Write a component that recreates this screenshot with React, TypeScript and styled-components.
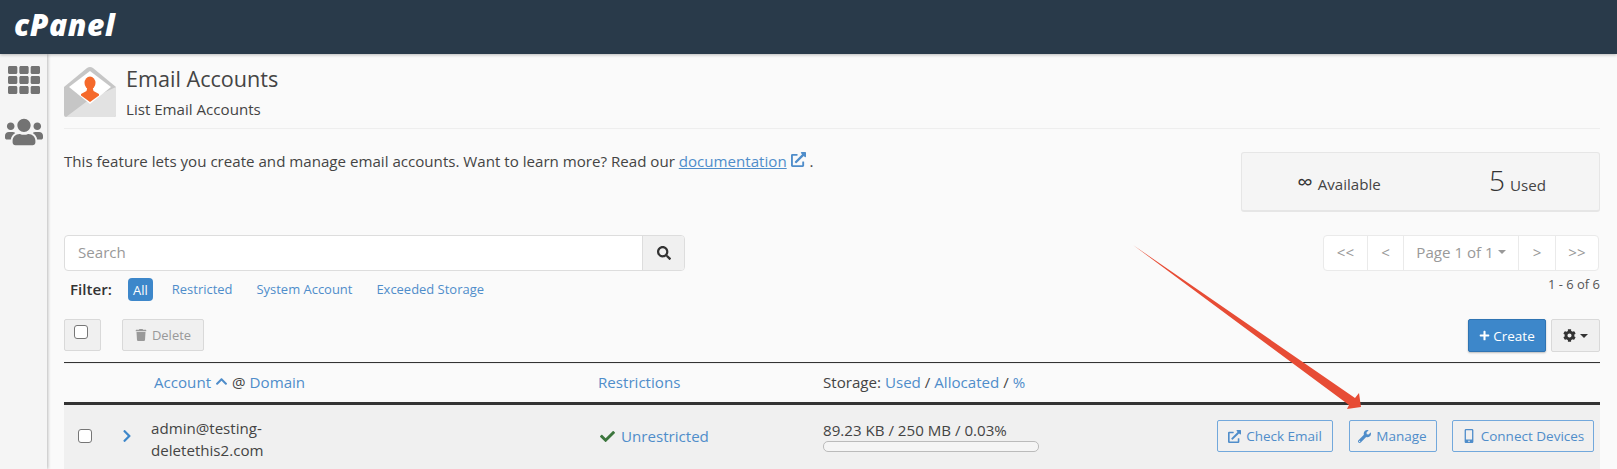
import React from "react";
import styled, { createGlobalStyle } from "styled-components";
import { FaTh, FaUsers, FaSearch, FaTrash, FaChevronUp, FaChevronRight, FaCheck, FaPlus, FaCog, FaExternalLinkAlt, FaWrench, FaMobileAlt } from "react-icons/fa";

const Global = createGlobalStyle`
  html, body { margin: 0; padding: 0; width: 1617px; height: 469px; overflow: hidden; background: #fafafa; }
  body { font-family: "Open Sans", "Liberation Sans", sans-serif; color: #444; font-size: 15.12px; }
  * { box-sizing: border-box; }
`;

const Page = styled.div`position: relative; width: 1617px; height: 469px; overflow: hidden;`;
const TopBar = styled.header`
  height: 54px; background: #293a4a; display: flex; align-items: center; padding-left: 14px;
  box-shadow: 0 1px 3px rgba(0,0,0,.25); position: relative; z-index: 2;
`;
const Logo = styled.span`
  font-family: "Open Sans", sans-serif; font-weight: 800; font-style: italic; font-size: 30px; line-height: 1;
  color: #fff; letter-spacing: 0.6px; position: relative; top: -2px;
`;
const Body = styled.div`display: flex; height: 415px;`;
const Side = styled.nav`
  width: 47px; background: #f5f5f5; box-shadow: 1px 0 3px rgba(0,0,0,.25); display: flex; flex-direction: column;
  align-items: center; padding-top: 10px; gap: 17px; color: #737373; flex: none; z-index: 1;
`;
const Main = styled.main`flex: none; width: 1536px; margin-left: 17px; padding-top: 12px;`;
const Heading = styled.div`display: flex; gap: 10px; height: 63px; border-bottom: 1px solid #eee;`;
const Titles = styled.div`display: flex; flex-direction: column;`;
const Title = styled.h1`margin: -1px 0 0; font-size: 21.6px; font-weight: 400; line-height: 27px; color: #444;`;
const Sub = styled.div`font-size: 15.12px; line-height: 20px; margin-top: 7px; color: #444;`;
const Intro = styled.div`display: flex; justify-content: space-between; height: 106px; padding-top: 22px;`;
const Desc = styled.p`margin: 0; font-size: 15.12px; line-height: 20px; display: flex; align-items: center; height: 20px;`;
const Link = styled.a`color: #4f8dca; text-decoration: ${p => p.$u ? "underline" : "none"};`;
const Stats = styled.div`
  width: 359px; height: 60px; background: #f5f5f5; border: 1px solid #e6e6e6; border-bottom-width: 2px; border-radius: 3px;
  display: grid; grid-template-columns: 194px 1fr; align-items: center; margin-top: 1px; font-size: 15.12px; color: #444; padding-bottom: 2px;
`;
const Stat = styled.div`display: flex; justify-content: center; align-items: baseline; gap: 5px; margin-bottom: ${p => p.$lift ?? 0}px;`;
const Big = styled.span`font-size: ${p => p.$s}px; font-weight: ${p => p.$w}; line-height: 32px; color: #333; position: relative; top: ${p => p.$t}px;`;
const Controls = styled.div`display: flex; justify-content: space-between; height: 84px;`;
const Left = styled.div`display: flex; flex-direction: column;`;
const SearchBox = styled.div`width: 621px; height: 36px; display: flex; border: 1px solid #ddd; border-radius: 4px; background: #fff; overflow: hidden;`;
const SearchInput = styled.div`flex: 1; padding-left: 13px; line-height: 33px; font-size: 15.12px; color: #999;`;
const SearchBtn = styled.div`width: 42px; background: #f0f0f0; border-left: 1px solid #ddd; display: flex; align-items: center; justify-content: center; color: #333;`;
const Filters = styled.div`display: flex; align-items: center; margin-top: 7px; padding-left: 6px; font-size: 12.96px; height: 23px;`;
const FilterLabel = styled.strong`font-size: 15.12px; font-weight: 600; margin: 0 16px 2px 0; color: #333;`;
const FilterAll = styled.span`background: #3d87ca; color: #fff; border-radius: 4px; width: 25px; height: 23px; display: flex; align-items: center; justify-content: center; margin-right: 19px;`;
const FilterLink = styled(Link)`margin: 0 ${p => p.$m}px 2px 0; white-space: nowrap;`;
const Right = styled.div`display: flex; flex-direction: column; align-items: flex-end;`;
const Pager = styled.div`width: 276px; height: 36px; display: flex; background: #fff; border: 1px solid #eaeaea; border-radius: 4px; color: #999; margin-right: 1px;`;
const PageCell = styled.div`
  width: ${p => p.$w}px; flex: none; display: flex; align-items: center; justify-content: center; gap: 4px; padding-bottom: 2px;
  font-size: 15.12px; border-left: ${p => p.$first ? "none" : "1px solid #eaeaea"};
`;
const Caret = styled.span`width: 0; height: 0; border-left: 4px solid transparent; border-right: 4px solid transparent; border-top: 4px solid ${p => p.$c};`;
const Count = styled.div`font-size: 12.96px; color: #555; margin-top: 5px; line-height: 17px;`;
const Actions = styled.div`display: flex; justify-content: space-between; height: 43px;`;
const ActGroup = styled.div`display: flex; gap: ${p => p.$g}px;`;
const GreyBtn = styled.div`
  height: 32px; width: ${p => p.$w}px; background: #f0f0f0; border: 1px solid #d9d9d9; border-radius: 2px; color: #999; font-size: 12.96px;
  display: flex; align-items: center; justify-content: center; gap: 5px;
`;
const Check = styled.span`width: 14px; height: 14px; display: block; border: 1px solid #767676; border-radius: 3px; background: #fff; flex: none;`;
const TopCheck = styled(Check)`position: relative; top: -3px; left: -2px;`;
const CreateBtn = styled.div`
  width: 78px; height: 33px; background: #3d87ca; color: #fff; border: 1px solid #2f74b3; border-radius: 2px; font-size: 13.5px;
  display: flex; align-items: center; justify-content: center; gap: 3px; box-shadow: 0 1px 2px rgba(0,0,0,.25);
`;
const GearBtn = styled(GreyBtn)`color: #333; height: 33px; gap: 4px;`;
const Table = styled.div`border-top: 1px solid #333;`;
const HeadRow = styled.div`
  display: grid; grid-template-columns: 90px 444px 225px 1fr; height: 42px; align-items: center;
  border-top: 1px solid #eee; border-bottom: 3px solid #333; font-size: 15.12px; padding-bottom: 2px;
`;
const HeadCell = styled.div`display: flex; align-items: center; gap: ${p => p.$g ?? 4}px; white-space: pre;`;
const Row = styled.div`
  display: grid; grid-template-columns: 87px 447px 225px 1fr; height: 80px; background: #f0f0f0; font-size: 15.12px; align-items: start;
`;
const RowToggle = styled.div`display: flex; align-items: center; height: 62px; padding-left: 14px; gap: 28px; color: #3d87ca;`;
const Email = styled.div`padding-top: 12px; line-height: 22px; width: 140px; color: #444;`;
const Status = styled.div`display: flex; align-items: center; gap: 6px; height: 62px; padding-left: 2px;`;
const StorageCell = styled.div`display: flex; justify-content: space-between;`;
const Usage = styled.div`padding-top: 15px; line-height: 20px; color: #444;`;
const Bar = styled.div`width: 216px; height: 11px; border: 1px solid #bbb; border-radius: 5px; background: #f5f5f5; margin-top: 1px;`;
const RowBtns = styled.div`display: flex; justify-content: flex-end; padding: 15px 6px 0 0; gap: 15.5px;`;
const OutBtn = styled.div`
  height: 32px; width: ${p => p.$w}px; border: 1px solid #72a8dc; border-radius: 2px; color: #4f8dca; font-size: 13.5px;
  display: flex; align-items: center; justify-content: center; gap: 5px; white-space: nowrap;
`;
const ArrowSvg = styled.svg`position: absolute; left: 0; top: 0; pointer-events: none; z-index: 5;`;

const MailIcon = () => (
  <svg width="52" height="52" viewBox="0 0 52 52">
    <path d="M0 21 L23 2 Q26 0 29 2 L52 21 V49 Q52 51 50 51 H2 Q0 51 0 49 Z" fill="#c6c6c6" />
    <path d="M52 21 V49 Q52 51 50 51 H2 L26 33 Z" fill="#e2e2e2" />
    <path d="M5 21 L26 5 L47 21 L26 38 Z" fill="#fff" />
    <ellipse cx="26" cy="17" rx="5.5" ry="6.5" fill="#f5692b" />
    <path d="M23.5 21 H28.5 L29.5 25 L35 28 V29.5 L26 36 L17 29.5 V28 L22.5 25 Z" fill="#f5692b" />
  </svg>
);

export default function App() {
  return (
    <Page>
      <Global />
      <TopBar><Logo>cPanel</Logo></TopBar>
      <Body>
        <Side>
          <FaTh size={32} />
          <FaUsers size={38} />
        </Side>
        <Main>
          <Heading>
            <MailIcon />
            <Titles>
              <Title>Email Accounts</Title>
              <Sub>List Email Accounts</Sub>
            </Titles>
          </Heading>
          <Intro>
            <Desc>
              This feature lets you create and manage email accounts. Want to learn more? Read our&nbsp;
              <Link $u href="#">documentation</Link>
              &nbsp;<Link as="span"><FaExternalLinkAlt size={15} /></Link>&nbsp;.
            </Desc>
            <Stats>
              <Stat><Big $s={22} $w={400} $t={0}>∞</Big> Available</Stat>
              <Stat $lift={2}><Big $s={28} $w={300} $t={0}>5</Big> Used</Stat>
            </Stats>
          </Intro>
          <Controls>
            <Left>
              <SearchBox>
                <SearchInput>Search</SearchInput>
                <SearchBtn><FaSearch size={14} /></SearchBtn>
              </SearchBox>
              <Filters>
                <FilterLabel>Filter:</FilterLabel>
                <FilterAll>All</FilterAll>
                <FilterLink $m={24} href="#">Restricted</FilterLink>
                <FilterLink $m={24} href="#">System Account</FilterLink>
                <FilterLink $m={0} href="#">Exceeded Storage</FilterLink>
              </Filters>
            </Left>
            <Right>
              <Pager>
                <PageCell $first $w={43}>&lt;&lt;</PageCell>
                <PageCell $w={36}>&lt;</PageCell>
                <PageCell $w={115}>Page 1 of 1<Caret $c="#999" /></PageCell>
                <PageCell $w={37}>&gt;</PageCell>
                <PageCell $w={43}>&gt;&gt;</PageCell>
              </Pager>
              <Count>1 - 6 of 6</Count>
            </Right>
          </Controls>
          <Actions>
            <ActGroup $g={21}>
              <GreyBtn $w={37}><TopCheck /></GreyBtn>
              <GreyBtn $w={82}><FaTrash size={12} />Delete</GreyBtn>
            </ActGroup>
            <ActGroup $g={5}>
              <CreateBtn><FaPlus size={11} />Create</CreateBtn>
              <GearBtn $w={49}><FaCog size={13} /><Caret $c="#333" /></GearBtn>
            </ActGroup>
          </Actions>
          <Table>
            <HeadRow>
              <div />
              <HeadCell><Link href="#">Account</Link><Link as="span"><FaChevronUp size={13} /></Link><span>@</span><Link href="#">Domain</Link></HeadCell>
              <HeadCell><Link href="#">Restrictions</Link></HeadCell>
              <HeadCell $g={0}>Storage: <Link href="#">Used</Link> / <Link href="#">Allocated</Link> / <Link href="#">%</Link></HeadCell>
            </HeadRow>
            <Row>
              <RowToggle><Check /><FaChevronRight size={14} /></RowToggle>
              <Email>admin@testing-deletethis2.com</Email>
              <Status><FaCheck size={15} color="#3c763d" /><Link href="#">Unrestricted</Link></Status>
              <StorageCell>
                <Usage>89.23 KB / 250 MB / 0.03%<Bar /></Usage>
                <RowBtns>
                  <OutBtn $w={116}><FaExternalLinkAlt size={13} />Check Email</OutBtn>
                  <OutBtn $w={88}><FaWrench size={13} />Manage</OutBtn>
                  <OutBtn $w={142}><FaMobileAlt size={14} />Connect Devices</OutBtn>
                </RowBtns>
              </StorageCell>
            </Row>
          </Table>
        </Main>
      </Body>
      <ArrowSvg width="1617" height="469">
        <polygon points="1133,245 1355,398 1359,393 1361,407 1347,409 1349,405" fill="#e74c35" />
      </ArrowSvg>
    </Page>
  );
}
